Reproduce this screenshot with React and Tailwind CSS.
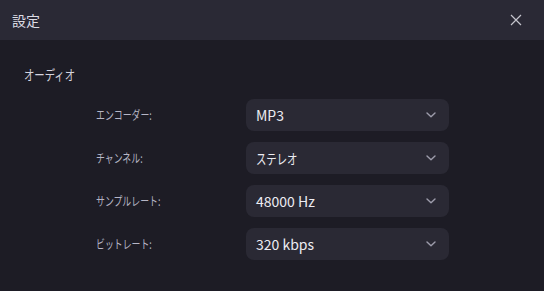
import React from 'react';

const rows = [
  { label: 'エンコーダー:', value: 'MP3' },
  { label: 'チャンネル:', value: 'ステレオ', kana: true },
  { label: 'サンプルレート:', value: '48000 Hz' },
  { label: 'ビットレート:', value: '320 kbps' },
];

// kana in the source UI font is narrower than Noto's, so squeeze it a bit
function Kana({ children, className = '' }) {
  return <span className={`inline-block origin-left scale-x-[0.74] whitespace-nowrap ${className}`}>{children}</span>;
}

function Chevron() {
  return (
    <svg width="12" height="8" viewBox="0 0 12 8" fill="none">
      <path d="M2 2 L6 5.8 L10 2" stroke="#9d9cab" strokeWidth="1.4" strokeLinecap="round" strokeLinejoin="round" />
    </svg>
  );
}

function SelectRow({ label, value, kana }) {
  return (
    <div className="flex items-center h-8">
      <div className="w-[150px] text-[12px] text-[#b6b6c6]">
        <Kana>{label}</Kana>
      </div>
      <button
        type="button"
        className="flex items-center justify-between w-[203px] h-8 pl-[10px] pr-[12px] rounded-lg bg-[#2a2934] text-[14px] text-[#ececf2]"
      >
        {kana ? <Kana>{value}</Kana> : <span>{value}</span>}
        <Chevron />
      </button>
    </div>
  );
}

export default function App() {
  return (
    <div
      className="w-[544px] h-[291px] bg-[#1d1c25] flex flex-col"
      style={{ fontFamily: '"Noto Sans CJK JP", "Noto Sans", sans-serif' }}
    >
      <div className="h-10 flex items-center justify-between pl-3 pr-[22px] bg-[#2a2935]">
        <span className="text-[14px] text-[#dcdce4]">設定</span>
        <svg width="12" height="12" viewBox="0 0 12 12">
          <path d="M1 1 L11 11 M11 1 L1 11" stroke="#c4c4cc" strokeWidth="1.2" />
        </svg>
      </div>
      <div className="pt-6 pl-6">
        <div className="text-[14px] leading-5 text-[#d4d4de]">
          <Kana className="scale-x-[0.7]">オーディオ</Kana>
        </div>
        <div className="mt-[15px] pl-[72px] flex flex-col gap-[11px]">
          {rows.map((r) => (
            <SelectRow key={r.label} label={r.label} value={r.value} kana={r.kana} />
          ))}
        </div>
      </div>
    </div>
  );
}
